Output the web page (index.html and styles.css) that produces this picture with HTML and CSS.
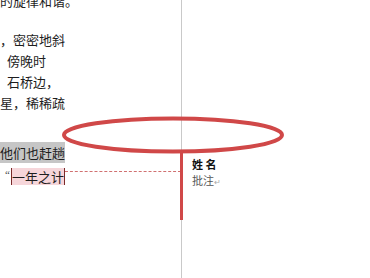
FILE: index.html
```html
<!DOCTYPE html>
<html lang="zh">
<head>
<meta charset="utf-8">
<link rel="stylesheet" href="styles.css">
</head>
<body>
<div class="page">
  <div class="doc">
    <div class="line top">的旋律和谐。</div>
    <div class="line blank"></div>
    <div class="line">，密密地斜</div>
    <div class="line indent">傍晚时</div>
    <div class="line indent">石桥边，</div>
    <div class="line">星，稀稀疏</div>
    <div class="gap"></div>
    <div class="line"><span class="hl">他们也赶趟</span></div>
    <div class="line marked">
      <span class="quote">“</span><span class="anchor">一年之计</span><span class="connector"></span>
    </div>
  </div>
  <div class="divider"></div>
  <div class="margin">
    <div class="comment">
      <div class="author">姓 名</div>
      <div class="body">批注<span class="ret">↵</span></div>
    </div>
  </div>
  <svg class="mark" width="370" height="278" viewBox="0 0 370 278">
    <ellipse cx="173" cy="135" rx="109" ry="16.5" fill="none" stroke="#d04848" stroke-width="4"/>
    <line x1="181.5" y1="151" x2="181.5" y2="220" stroke="#d04848" stroke-width="3"/>
  </svg>
</div>
</body>
</html>
```

FILE: styles.css
```css
html, body {
  margin: 0;
  padding: 0;
  background: #fff;
}
.page {
  position: relative;
  width: 370px;
  height: 278px;
  overflow: hidden;
  display: flex;
  font-family: "Noto Sans CJK SC", "Noto Sans", sans-serif;
  color: #1e1e1e;
}
.doc {
  width: 181px;
  display: flex;
  flex-direction: column;
  margin-top: -10px;
}
.line {
  height: 21px;
  line-height: 21px;
  font-size: 13px;
  white-space: nowrap;
}
.blank {
  height: 18px;
}
.indent {
  padding-left: 7px;
}
.gap {
  height: 29px;
}
.hl {
  background: #c6c6c6;
  padding: 1px 0;
}
.marked {
  display: flex;
  align-items: flex-start;
  padding-left: 5px;
  margin-top: 5px;
}
.quote {
  font-family: "Liberation Serif", serif;
  font-size: 11px;
  line-height: 12px;
  color: #444;
  padding-right: 1px;
}
.anchor {
  background: #f6d6da;
  border-left: 1px solid #7a2a2a;
  border-right: 1px solid #7a2a2a;
  line-height: 17px;
}
.connector {
  flex: 1;
  margin-top: 3px;
  border-top: 1px dashed #d07070;
}
.divider {
  width: 1px;
  background: #c9c9c9;
}
.margin {
  flex: 1;
  padding: 156px 0 0 10px;
}
.author {
  font-size: 11px;
  font-weight: bold;
  line-height: 16px;
  color: #111;
}
.body {
  font-size: 11px;
  line-height: 16px;
  color: #555;
}
.ret {
  font-size: 8px;
  color: #aaa;
}
.mark {
  position: absolute;
  left: 0;
  top: 0;
}
```
